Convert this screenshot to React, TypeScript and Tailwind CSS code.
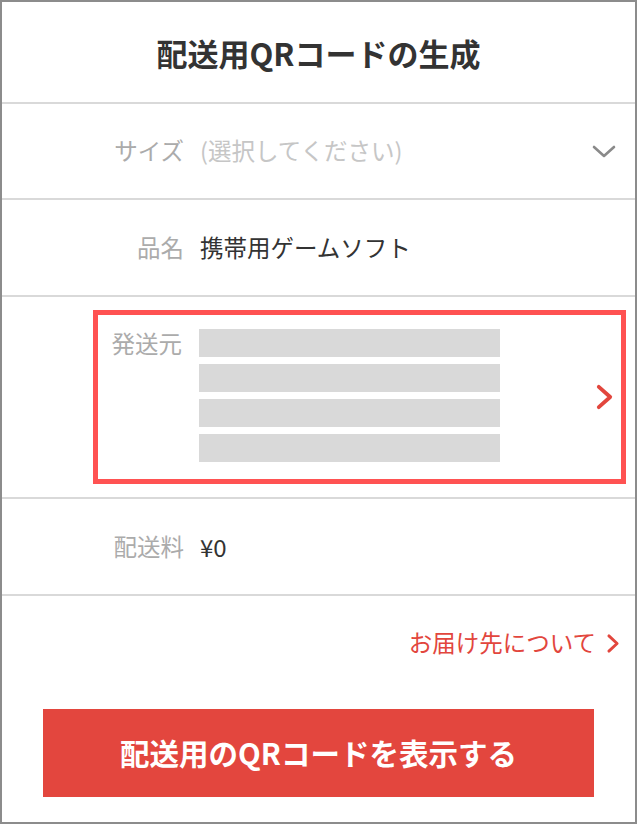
const labelClass = "text-right text-[23.5px] leading-none text-[#ababab]";
const valueClass = "text-[23.5px] leading-none text-[#333]";
const dividerClass = "h-[2px] w-full bg-[#d9d9d9]";

function ChevronDown() {
  return (
    <svg width="24" height="13" viewBox="0 0 24 13" fill="none">
      <path
        d="M2 2L12 11L22 2"
        stroke="#8a8a8a"
        strokeWidth="2.6"
        strokeLinecap="round"
        strokeLinejoin="round"
      />
    </svg>
  );
}

function ChevronRight({ w, h, stroke }: { w: number; h: number; stroke: number }) {
  return (
    <svg width={w} height={h} viewBox={`0 0 ${w} ${h}`} fill="none">
      <path
        d={`M${stroke} ${stroke}L${w - stroke} ${h / 2}L${stroke} ${h - stroke}`}
        stroke="#e2463d"
        strokeWidth={stroke}
        strokeLinecap="round"
        strokeLinejoin="round"
      />
    </svg>
  );
}

function Row({ label, children }: { label: string; children: React.ReactNode }) {
  return (
    <div className="flex h-[95px] items-center">
      <span className={`w-[182px] ${labelClass}`}>{label}</span>
      <div className="flex flex-1 items-center pl-[16px]">{children}</div>
    </div>
  );
}

export default function App() {
  const bars = [0, 1, 2, 3];

  return (
    <div className="flex h-[824px] w-[637px] flex-col border-2 border-[#8c8c8c] bg-white font-['Noto_Sans_CJK_JP',sans-serif]">
      <header className="flex h-[100px] items-center justify-center">
        <h1 className="text-[31px] font-bold leading-none text-[#333]">
          配送用QRコードの生成
        </h1>
      </header>
      <div className={dividerClass} />

      <div className="flex h-[94px] items-center">
        <span className={`w-[182px] ${labelClass}`}>サイズ</span>
        <span className="flex-1 pl-[16px] text-[23.5px] leading-none text-[#c6c6c6]">
          (選択してください)
        </span>
        <div className="pr-[19px]">
          <ChevronDown />
        </div>
      </div>
      <div className={dividerClass} />

      <Row label="品名">
        <span className={valueClass}>携帯用ゲームソフト</span>
      </Row>
      <div className={dividerClass} />

      <div className="flex h-[200px] items-center pl-[91px] pr-[9px]">
        <div className="flex h-[174px] w-full items-center border-[5px] border-[#ff5252]">
          <div className="flex h-full flex-1 items-start pt-[14px]">
            <span className={`w-[84px] pt-[3px] ${labelClass}`}>発送元</span>
            <div className="flex flex-col gap-[7px] pl-[17px]">
              {bars.map((bar) => (
                <div key={bar} className="h-[28px] w-[301px] bg-[#d9d9d9]" />
              ))}
            </div>
          </div>
          <div className="pr-[7px]">
            <ChevronRight w={19} h={28} stroke={3.8} />
          </div>
        </div>
      </div>
      <div className={dividerClass} />

      <Row label="配送料">
        <span className={`${valueClass} text-[24px]`}>¥0</span>
      </Row>
      <div className={dividerClass} />

      <div className="flex flex-col pt-[30px]">
        <a className="flex h-[34px] items-center justify-end gap-[10px] pr-[15px] text-[23.5px] leading-none text-[#e2463d]">
          お届け先について
          <ChevronRight w={14} h={21} stroke={2.9} />
        </a>
        <button
          type="button"
          className="ml-[41px] mt-[49px] flex h-[88px] w-[551px] items-center justify-center bg-[#e3463e] text-[29.5px] font-bold leading-none text-white"
        >
          配送用のQRコードを表示する
        </button>
      </div>
    </div>
  );
}
